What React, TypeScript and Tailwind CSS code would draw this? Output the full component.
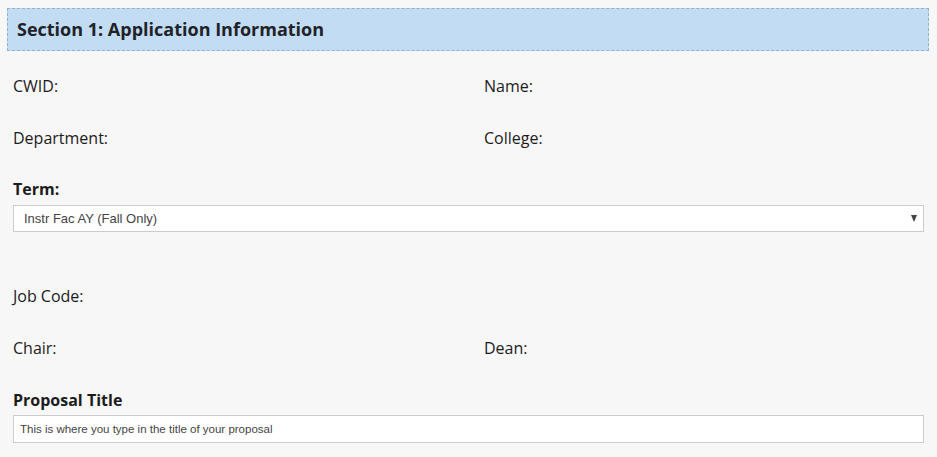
export default function App() {
  return (
    <div className="min-h-[457px] bg-[#f7f7f7] pt-[8px] font-['Open_Sans',sans-serif] text-[#1c1c1c]">
      {/* En-tête de section */}
      <div className="ml-[7px] mr-[8px] flex h-[43px] items-center border border-dashed border-[#93b0cc] bg-[#c2dcf4] px-[9px]">
        <h2 className="text-[18px] font-bold text-[#1f2328]">Section 1: Application Information</h2>
      </div>

      <div className="px-[13px] pt-[24px]">
        <div className="grid grid-cols-[471px_1fr] gap-y-[30px] text-[16px] font-medium leading-[22px]">
          <div>CWID:</div>
          <div>Name:</div>
          <div>Department:</div>
          <div>College:</div>
        </div>

        <div className="mt-[29px]">
          <label className="block text-[16px] font-bold leading-[22px]">Term:</label>
          <div className="relative mt-[5px]">
            <select
              defaultValue="fall"
              className="h-[27px] w-full appearance-none border border-[#ccc] bg-white px-[10px] font-['Liberation_Sans',Arial,sans-serif] text-[13px] text-[#444] outline-none"
            >
              <option value="fall">Instr Fac AY (Fall Only)</option>
            </select>
            <span className="pointer-events-none absolute right-[7px] top-[10px] h-0 w-0 border-x-[3.5px] border-t-[7px] border-x-transparent border-t-[#444]" />
          </div>
        </div>

        <div className="mt-[53px] grid grid-cols-[471px_1fr] gap-y-[30px] text-[16px] font-medium leading-[22px]">
          <div className="col-span-2">Job Code:</div>
          <div>Chair:</div>
          <div>Dean:</div>
        </div>

        <div className="mt-[30px]">
          <label className="block text-[16px] font-bold leading-[22px]">Proposal Title</label>
          <div className="mt-[4px]">
            <input
              type="text"
              defaultValue="This is where you type in the title of your proposal"
              className="h-[28px] w-full border border-[#ccc] bg-white px-[6px] font-['Liberation_Sans',Arial,sans-serif] text-[11.5px] text-[#444] outline-none"
            />
          </div>
        </div>
      </div>
    </div>
  );
}
